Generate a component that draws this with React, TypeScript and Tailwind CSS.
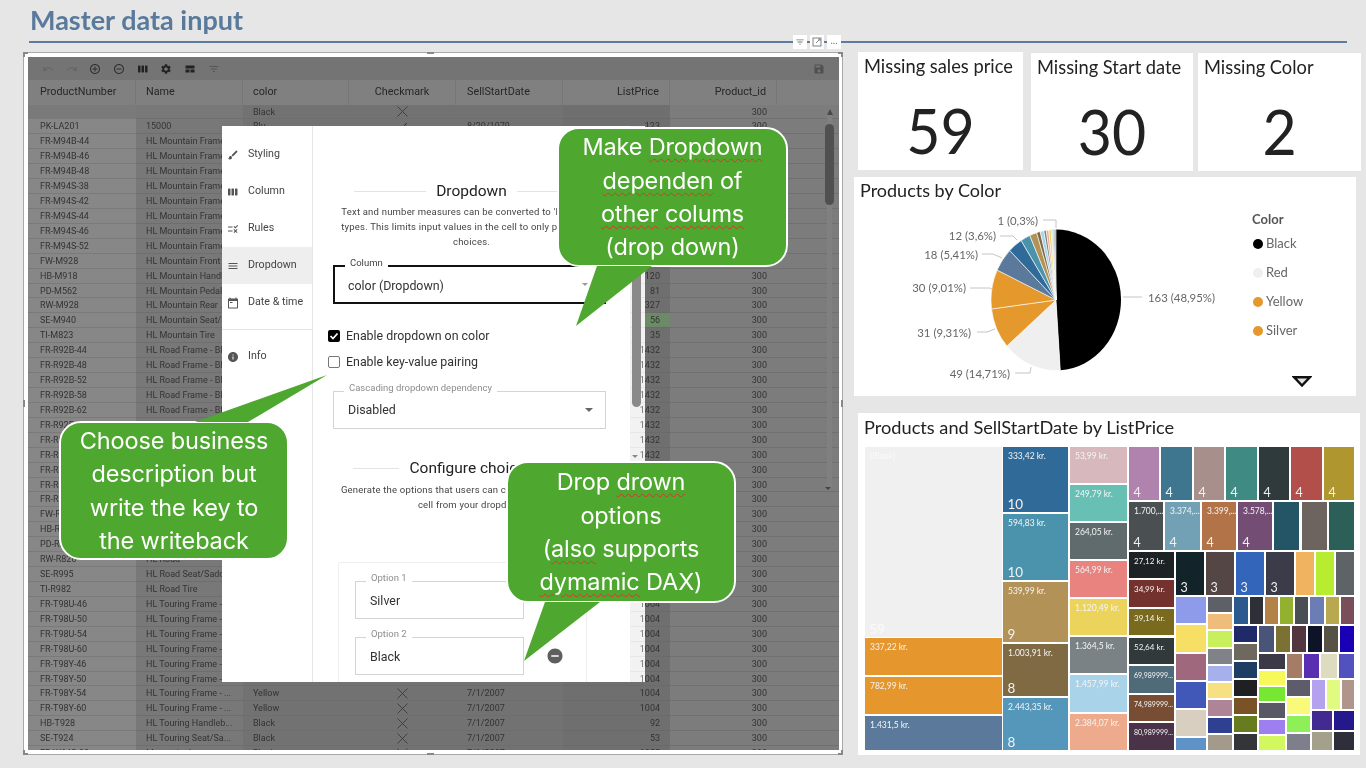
import React from "react";

const P = {
  brush: "M7 14c-1.66 0-3 1.34-3 3 0 1.31-1.16 2-2 2 .92 1.22 2.49 2 4 2 2.21 0 4-1.79 4-4 0-1.66-1.34-3-3-3zm13.71-9.37l-1.34-1.34c-.39-.39-1.02-.39-1.41 0L9 12.25 11.75 15l8.96-8.96c.39-.39.39-1.02 0-1.41z",
  week: "M6 5H3c-.55 0-1 .45-1 1v12c0 .55.45 1 1 1h3c.55 0 1-.45 1-1V6c0-.55-.45-1-1-1zm14 0h-3c-.55 0-1 .45-1 1v12c0 .55.45 1 1 1h3c.55 0 1-.45 1-1V6c0-.55-.45-1-1-1zm-7 0h-3c-.55 0-1 .45-1 1v12c0 .55.45 1 1 1h3c.55 0 1-.45 1-1V6c0-.55-.45-1-1-1z",
  rule: "M16.54 11L13 7.46l1.41-1.41 2.12 2.12 4.24-4.24 1.41 1.41L16.54 11zM11 7H2v2h9V7zm10 6.41L19.59 12 17 14.59 14.41 12 13 13.41 15.59 16 13 18.59 14.41 20 17 17.41 19.59 20 21 18.59 18.41 16 21 13.41zM11 15H2v2h9v-2z",
  menu: "M3 18h18v-2H3v2zm0-5h18v-2H3v2zm0-7v2h18V6H3z",
  cal: "M20 3h-1V1h-2v2H7V1H5v2H4c-1.1 0-2 .9-2 2v16c0 1.1.9 2 2 2h16c1.1 0 2-.9 2-2V5c0-1.1-.9-2-2-2zm0 18H4V8h16v13zM6 10h5v2H6z",
  info: "M12 2C6.48 2 2 6.48 2 12s4.48 10 10 10 10-4.48 10-10S17.52 2 12 2zm1 15h-2v-6h2v6zm0-8h-2V7h2v2z",
  add: "M13 7h-2v4H7v2h4v4h2v-4h4v-2h-4V7zm-1-5C6.48 2 2 6.48 2 12s4.48 10 10 10 10-4.48 10-10S17.52 2 12 2zm0 18c-4.41 0-8-3.59-8-8s3.59-8 8-8 8 3.59 8 8-3.59 8-8 8z",
  rem: "M7 11v2h10v-2H7zm5-9C6.48 2 2 6.48 2 12s4.48 10 10 10 10-4.48 10-10S17.52 2 12 2zm0 18c-4.41 0-8-3.59-8-8s3.59-8 8-8 8 3.59 8 8-3.59 8-8 8z",
  undo: "M12.5 8c-2.65 0-5.05.99-6.9 2.6L2 7v9h9l-3.62-3.62c1.39-1.16 3.16-1.88 5.12-1.88 3.54 0 6.55 2.31 7.6 5.5l2.37-.78C21.08 11.03 17.15 8 12.5 8z",
  redo: "M18.4 10.6C16.55 8.99 14.15 8 11.5 8c-4.65 0-8.58 3.03-9.96 7.22L3.9 16c1.05-3.19 4.05-5.5 7.6-5.5 1.95 0 3.73.72 5.12 1.88L13 16h9V7l-3.6 3.6z",
  gear: "M19.14 12.94c.04-.3.06-.61.06-.94 0-.32-.02-.64-.07-.94l2.03-1.58c.18-.14.23-.41.12-.61l-1.92-3.32c-.12-.22-.37-.29-.59-.22l-2.39.96c-.5-.38-1.03-.7-1.62-.94l-.36-2.54c-.04-.24-.24-.41-.48-.41h-3.84c-.24 0-.43.17-.47.41l-.36 2.54c-.59.24-1.13.57-1.62.94l-2.39-.96c-.22-.08-.47 0-.59.22L2.74 8.87c-.12.21-.08.47.12.61l2.03 1.58c-.05.3-.09.63-.09.94s.02.64.07.94l-2.03 1.58c-.18.14-.23.41-.12.61l1.92 3.32c.12.22.37.29.59.22l2.39-.96c.5.38 1.03.7 1.62.94l.36 2.54c.05.24.24.41.48.41h3.84c.24 0 .44-.17.47-.41l.36-2.54c.59-.24 1.13-.56 1.62-.94l2.39.96c.22.08.47 0 .59-.22l1.92-3.32c.12-.22.07-.47-.12-.61l-2.01-1.58zM12 15.6c-1.98 0-3.6-1.62-3.6-3.6s1.62-3.6 3.6-3.6 3.6 1.62 3.6 3.6-1.62 3.6-3.6 3.6z",
  quilt: "M3 5h18v6H3zM3 13h8v6H3zM13 13h8v6h-8z",
  filter: "M10 18h4v-2h-4v2zM3 6v2h18V6H3zm3 7h12v-2H6v2z",
  save: "M17 3H5c-1.11 0-2 .9-2 2v14c0 1.1.89 2 2 2h14c1.1 0 2-.9 2-2V7l-4-4zm-5 16c-1.66 0-3-1.34-3-3s1.34-3 3-3 3 1.34 3 3-1.34 3-3 3zm3-10H5V5h10v4z",
  minus: "M12 2C6.48 2 2 6.48 2 12s4.48 10 10 10 10-4.48 10-10S17.52 2 12 2zm5 11H7v-2h10v2z",
};

function Ico({ d, size, fill, className }: { d: string; size: number; fill: string; className?: string }) {
  return (
    <svg width={size} height={size} viewBox="0 0 24 24" fill={fill} className={className}>
      <path d={d} />
    </svg>
  );
}

const pn = [
  "", "PK-LA201", "FR-M94B-44", "FR-M94B-46", "FR-M94B-48", "FR-M94S-38", "FR-M94S-42", "FR-M94S-44", "FR-M94S-46", "FR-M94S-52",
  "FW-M928", "HB-M918", "PD-M562", "RW-M928", "SE-M940", "TI-M823", "FR-R92B-44", "FR-R92B-48", "FR-R92B-52", "FR-R92B-58", "FR-R92B-62",
  "FR-R92R-44", "FR-R92R-48", "FR-R92R-52", "FR-R92R-58", "FR-R92R-62", "FR-R38R-44", "FW-R820", "HB-R956", "PD-R853", "RW-R820", "SE-R995", "TI-R982",
  "FR-T98U-46", "FR-T98U-50", "FR-T98U-54", "FR-T98U-60", "FR-T98Y-46", "FR-T98Y-50", "FR-T98Y-54", "FR-T98Y-60", "HB-T928", "SE-T924", "FR-W64S-38",
];
function nameOf(p: string, i: number) {
  if (i === 0) return "";
  if (i === 1) return "15000";
  if (p.startsWith("FR-M")) return "HL Mountain Frame - ...";
  if (p === "FW-M928") return "HL Mountain Front ...";
  if (p === "HB-M918") return "HL Mountain Handleb...";
  if (p === "PD-M562") return "HL Mountain Pedal";
  if (p === "RW-M928") return "HL Mountain Rear ...";
  if (p === "SE-M940") return "HL Mountain Seat/S...";
  if (p === "TI-M823") return "HL Mountain Tire";
  if (p.startsWith("FR-R")) return "HL Road Frame - Black...";
  if (p === "SE-R995") return "HL Road Seat/Saddle";
  if (p === "TI-R982") return "HL Road Tire";
  if (p === "HB-T928") return "HL Touring Handleb...";
  if (p === "SE-T924") return "HL Touring Seat/Sa...";
  if (p.startsWith("FR-T")) return "HL Touring Frame - ...";
  if (i === 43) return "Mountain Jersey";
  return "HL Road";
}
function priceOf(i: number) {
  if (i === 1) return "123";
  if (i >= 2 && i <= 10) return "";
  const m: Record<number, string> = { 11: "120", 12: "81", 13: "327", 14: "56", 15: "35", 41: "92", 42: "53", 43: "1055" };
  if (m[i]) return m[i];
  if (i >= 16 && i <= 26) return "1432";
  if (i >= 33) return "1004";
  return "";
}
const colors: Record<number, string> = { 0: "Black", 1: "Blu", 39: "Yellow", 40: "Yellow", 41: "Black", 42: "Black", 43: "Black" };

function XMark() {
  return (
    <svg width="11" height="11" viewBox="0 0 11 11" stroke="#3a3a3a" strokeWidth="0.9" fill="none">
      <path d="M0.5 0.5L10.5 10.5M10.5 0.5L0.5 10.5" />
    </svg>
  );
}
function Check() {
  return (
    <svg width="11" height="11" viewBox="0 0 11 11" stroke="#2a2a2a" strokeWidth="1" fill="none">
      <path d="M1.5 6L4.5 9L9.5 2" />
    </svg>
  );
}

function Row({ i }: { i: number }) {
  const p = pn[i];
  const price = priceOf(i);
  const hasDate = i === 1 || i >= 39;
  return (
    <div className="flex h-[14.93px] shrink-0 text-[9px] leading-[14px] text-[#333]">
      <div className={`w-[108px] pl-[12px] border-b border-[#7a7a7a] ${i === 0 ? "bg-[#7a7a7a]" : "bg-[#878787]"}`}>{p}</div>
      <div className="w-[107px] pl-[10px] bg-[#787878] border-b border-[#6e6e6e] whitespace-nowrap overflow-hidden">{nameOf(p, i)}</div>
      <div className="w-[106px] pl-[10px] bg-[#727272] border-b border-[#6e6e6e]">{colors[i] ?? ""}</div>
      <div className="w-[107px] bg-[#727272] flex items-center justify-center border-b border-[#6e6e6e]">
        {i === 0 || i >= 39 ? <XMark /> : i === 1 ? <Check /> : null}
      </div>
      <div className="w-[107px] pl-[11px] bg-[#727272] border-b border-[#6e6e6e]">{i === 1 ? "8/20/1979" : hasDate ? "7/1/2007" : ""}</div>
      <div className={`w-[107px] pr-[10px] text-right border-b border-[#6a6a6a] ${i === 14 ? "bg-[linear-gradient(90deg,#6f6f6f_82px,#6b8a66_82px)]" : "bg-[#6f6f6f]"}`}>{price}</div>
      <div className="w-[107px] pr-[10px] text-right bg-[#7c7c7c] border-b border-[#707070]">300</div>
      <div className="flex-1 bg-[#7c7c7c] border-b border-[#707070]" />
    </div>
  );
}

function Table() {
  const heads: [string, string][] = [
    ["ProductNumber", "w-[108px] pl-[12px] text-left"],
    ["Name", "w-[107px] pl-[10px] text-left"],
    ["color", "w-[106px] pl-[10px] text-left"],
    ["Checkmark", "w-[107px] text-center"],
    ["SellStartDate", "w-[107px] pl-[11px] text-left"],
    ["ListPrice", "w-[107px] pr-[10px] text-right"],
    ["Product_id", "w-[107px] pr-[10px] text-right"],
  ];
  const tools: string[] = [P.undo, P.redo, P.add, P.rem, P.week, P.gear, P.quilt, P.filter];
  return (
    <div className="relative h-full overflow-hidden bg-[#7c7c7c] flex flex-col">
      <div className="h-[23px] shrink-0 bg-[#747474] flex items-center pl-[14px] pr-[14px] gap-[11.7px]">
        {tools.map((d, k) => (
          <Ico key={k} d={d} size={12} fill={k < 2 ? "#666" : k < 4 ? "#2f2f2f" : k === 7 ? "#555" : "#222"} />
        ))}
        <div className="flex-1" />
        <Ico d={P.save} size={12} fill="#505050" />
      </div>
      <div className="h-[24.5px] shrink-0 bg-[#808080] flex text-[10.8px] leading-[24px] text-[#262626]">
        {heads.map(([t, c]) => (
          <div key={t} className={`${c} border-r border-[#767676]`}>{t}</div>
        ))}
      </div>
      {pn.map((_, i) => (
        <Row key={i} i={i} />
      ))}
      <div className="absolute left-[799px] top-[56px] w-[5px] h-[375px] bg-[#808080]" />
      <div className="absolute left-[797px] top-[67px] w-[9px] h-[81px] rounded-full bg-[#505050]" />
      <div className="absolute left-[799px] top-[52px] w-0 h-0 border-x-[3px] border-x-transparent border-b-[6px] border-b-[#4a4a4a]" />
      <div className="absolute left-[797px] top-[430px] w-0 h-0 border-x-[3px] border-x-transparent border-t-[3px] border-t-[#444]" />
    </div>
  );
}

function Frame({ label, h, active, className, children, muted }: { label: string; h: string; active?: boolean; className?: string; muted?: boolean; children: React.ReactNode }) {
  return (
    <div className={`relative ${h} ${className ?? ""} ${active ? "border-2 border-[#111]" : "border border-[#d4d4d4]"}`}>
      <span className={`absolute left-[10px] -top-[10px] px-[5px] bg-white text-[9.5px] leading-[12px] ${muted ? "text-[#8d8d8d]" : "text-[#444]"}`}>{label}</span>
      {children}
    </div>
  );
}

function Heading({ t, w }: { t: string; w: string }) {
  return (
    <div className="flex items-center justify-center gap-[10px] h-[20px]">
      <div className={`${w} h-px bg-[#e3e3e3]`} />
      <div className="text-[15.5px] leading-[20px] text-[#222] whitespace-nowrap">{t}</div>
      <div className={`${w} h-px bg-[#e3e3e3]`} />
    </div>
  );
}

function Modal() {
  const items: [string, string, boolean][] = [
    ["Styling", P.brush, false],
    ["Column", P.week, false],
    ["Rules", P.rule, false],
    ["Dropdown", P.menu, true],
    ["Date & time", P.cal, false],
  ];
  return (
    <>
      <div className="absolute left-[222px] top-[126px] w-[408px] h-[556px] bg-white flex overflow-hidden font-[Roboto,sans-serif]">
        <div className="w-[91px] shrink-0 border-r border-[#e6e6e6] pt-[10px]">
          {items.map(([t, d, a]) => (
            <div key={t} className={`flex items-center h-[37px] pl-[5px] gap-[9px] text-[10.7px] text-[#444] ${a ? "bg-[#eeeeee]" : ""}`}>
              <Ico d={d} size={12} fill="#555" />
              {t}
            </div>
          ))}
          <div className="h-px bg-[#e4e4e4] mt-[8px]" />
          <div className="flex items-center h-[37px] pl-[5px] gap-[9px] mt-[8px] text-[10.7px] text-[#444]">
            <Ico d={P.info} size={12} fill="#555" />
            Info
          </div>
        </div>
        <div className="flex-1 min-w-0">
          <div className="pt-[55px]">
            <Heading t="Dropdown" w="w-[72px]" />
          </div>
          <div className="mt-[3px] text-center text-[9.5px] leading-[15px] tracking-[0.2px] text-[#444] whitespace-nowrap">
            <div>Text and number measures can be converted to 'Dropdown'</div>
            <div>types. This limits input values in the cell to only pre-defined</div>
            <div>choices.</div>
          </div>
          <Frame label="Column" h="h-[39px]" active className="ml-[20px] w-[273px] mt-[16px]">
            <div className="pl-[13px] pt-[11px] text-[12.4px] leading-[16px] text-[#333]">color (Dropdown)</div>
            <div className="absolute right-[16px] top-[16px] w-0 h-0 border-x-[3px] border-x-transparent border-t-[3px] border-t-[#999]" />
          </Frame>
          <div className="ml-[15px] mt-[24px] flex items-center h-[16px] gap-[6px] text-[12.4px] text-[#333]">
            <div className="w-[12px] h-[12px] rounded-[2px] bg-black flex items-center justify-center">
              <svg width="10" height="10" viewBox="0 0 10 10" fill="none" stroke="#fff" strokeWidth="1.7"><path d="M1.5 5L4 7.5L8.5 2.5" /></svg>
            </div>
            Enable dropdown on color
          </div>
          <div className="ml-[15px] mt-[10px] flex items-center h-[16px] gap-[6px] text-[12.4px] text-[#333]">
            <div className="w-[12px] h-[12px] rounded-[2px] border border-[#777]" />
            Enable key-value pairing
          </div>
          <Frame label="Cascading dropdown dependency" h="h-[38px]" muted className="ml-[20px] w-[273px] mt-[21px]">
            <div className="pl-[14px] pt-[10px] text-[12.4px] leading-[16px] text-[#333]">Disabled</div>
            <div className="absolute right-[12px] top-[16px] w-0 h-0 border-x-[4px] border-x-transparent border-t-[4px] border-t-[#666]" />
          </Frame>
          <div className="mt-[29px]">
            <Heading t="Configure choices" w="w-[46px]" />
          </div>
          <div className="mt-[4px] text-center text-[9.5px] leading-[15px] tracking-[0.2px] text-[#444] whitespace-nowrap">
            <div>Generate the options that users can choose to populate the</div>
            <div>cell from your dropdown</div>
          </div>
          <div className="ml-[25px] w-[249px] mt-[49.5px] h-[140px] border border-[#eeeeee] rounded-[2px] pl-[16px] pt-[18px]">
            <Frame label="Option 1" h="h-[38px]" muted className="w-[169px]">
              <div className="pl-[14px] pt-[11px] text-[12.4px] leading-[16px] text-[#333]">Silver</div>
            </Frame>
            <div className="mt-[18px] flex items-center">
              <Frame label="Option 2" h="h-[38px]" muted className="w-[169px]">
                <div className="pl-[14px] pt-[11px] text-[12.4px] leading-[16px] text-[#333]">Black</div>
              </Frame>
              <Ico d={P.minus} size={18} fill="#5f5f5f" className="ml-[22px]" />
            </div>
          </div>
        </div>
      </div>
      <div className="absolute left-[630px] top-[126px] w-[15px] h-[556px] bg-[#8a8a8a] mix-blend-color-dodge" />
      <div className="absolute left-[632px] top-[250px] w-[9px] h-[157px] rounded-b-full bg-[#8a8a8a]" />
      <div className="absolute left-[632px] top-[455px] w-0 h-0 border-x-[3px] border-x-transparent border-t-[3px] border-t-[#888]" />
    </>
  );
}

const wavy = "underline decoration-wavy decoration-[#d9362b] decoration-1 underline-offset-[3px]";

function Callout({ box, tail, children }: { box: string; tail: string; children: React.ReactNode }) {
  return (
    <>
      <div className={`absolute ${box} rounded-[22px] bg-[#4ea72e] border-2 border-white flex flex-col items-center justify-center text-white text-[23.5px] tracking-[-0.15px] leading-[33.4px] font-[Inter,sans-serif] whitespace-nowrap`}>
        {children}
      </div>
      <svg className="absolute left-0 top-0 pointer-events-none" width="1366" height="768">
        <polygon points={tail} fill="#4ea72e" />
      </svg>
    </>
  );
}

function Pie() {
  const data: [number, string][] = [
    [163, "#000000"], [49, "#efefef"], [31, "#e5982c"], [30, "#e5982c"], [18, "#5b7a9b"], [12, "#2f6a99"], [8, "#4b93ad"], [6, "#b39257"],
    [3, "#7f6a44"], [3, "#a9d3e8"], [2, "#7b8285"], [2, "#eeaa8c"], [2, "#ecd45c"], [1, "#d7b9bd"], [1, "#68bfb3"], [1, "#5f6b6d"], [1, "#5497bb"],
  ];
  const total = data.reduce((a, b) => a + b[0], 0);
  const cx = 1056, cy = 300, rx = 65, ry = 70.5;
  let acc = 0;
  const slices = data.map(([v, c], i) => {
    const a0 = (acc / total) * 2 * Math.PI;
    acc += v;
    const a1 = (acc / total) * 2 * Math.PI;
    const x0 = cx + rx * Math.sin(a0), y0 = cy - ry * Math.cos(a0);
    const x1 = cx + rx * Math.sin(a1), y1 = cy - ry * Math.cos(a1);
    const large = a1 - a0 > Math.PI ? 1 : 0;
    return <path key={i} d={`M${cx} ${cy}L${x0} ${y0}A${rx} ${ry} 0 ${large} 1 ${x1} ${y1}Z`} fill={c} stroke="#fff" strokeWidth={i === 0 ? 0 : 0.6} />;
  });
  const lines = ["1123,297 1142,297", "1015,373 1030,373 1031,367", "977,332 987,332 995,329", "970,288 990,288 993,290", "982,254 993,254 1002,258", "1000,236 1013,236 1017,240", "1043,220 1056,220 1056,228"];
  const labels: [string, number, number, "start" | "end"][] = [
    ["163 (48,95%)", 1148, 302, "start"], ["49 (14,71%)", 1010, 378, "end"], ["31 (9,31%)", 971, 337, "end"], ["30 (9,01%)", 966, 292, "end"],
    ["18 (5,41%)", 978, 259, "end"], ["12 (3,6%)", 996, 240, "end"], ["1 (0,3%)", 1038, 225, "end"],
  ];
  return (
    <svg viewBox="854 207 385 187" width="385" height="187" className="shrink-0">
      {slices}
      {lines.map((l, i) => <polyline key={i} points={l} fill="none" stroke="#c4c4c4" strokeWidth="1" />)}
      {labels.map(([t, x, y, a]) => (
        <text key={t} x={x} y={y} textAnchor={a} fontSize="11.4" fill="#666" className="font-[Lato,sans-serif]">{t}</text>
      ))}
    </svg>
  );
}

type R = [number, number, number, number, string, string?, string?];
const tree: R[] = [
  [865, 1002, 447, 637, "#f0f0f0", "(Blank)", "59"], [865, 1002, 638, 675, "#e5972d", "337,22 kr."], [865, 1002, 677, 714, "#e5972d", "782,99 kr."], [865, 1002, 716, 750, "#5b7a9b", "1.431,5 kr."],
  [1003, 1068, 447, 512, "#2f6a99", "333,42 kr.", "10"], [1003, 1068, 514, 580, "#4b93ad", "594,83 kr.", "10"], [1003, 1068, 582, 642, "#b39257", "539,99 kr.", "9"], [1003, 1068, 644, 696, "#7f6a44", "1.003,91 kr.", "8"], [1003, 1068, 698, 750, "#5497bb", "2.443,35 kr.", "8"],
  [1070, 1127, 447, 483, "#d7b9bd", "53,99 kr."], [1070, 1127, 485, 521, "#68bfb3", "249,79 kr."], [1070, 1127, 523, 559, "#5f6b6d", "264,05 kr."], [1070, 1127, 561, 597, "#e8837f", "564,99 kr."], [1070, 1127, 599, 635, "#ecd45c", "1.120,49 kr."], [1070, 1127, 637, 673, "#7b8285", "1.364,5 kr."], [1070, 1127, 675, 712, "#a9d3e8", "1.457,99 kr."], [1070, 1127, 714, 750, "#eeaa8c", "2.384,07 kr."],
  [1129, 1159, 447, 500, "#b083ae", "", "4"], [1161, 1192, 447, 500, "#3e7690", "", "4"], [1194, 1224, 447, 500, "#a78f8c", "", "4"], [1226, 1257, 447, 500, "#3f8b83", "", "4"], [1259, 1289, 447, 500, "#2f3a3d", "", "4"], [1291, 1322, 447, 500, "#b34f4b", "", "4"], [1324, 1354, 447, 500, "#b0962f", "", "4"],
  [1129, 1163, 502, 550, "#4a5052", "1.700,...", "4"], [1165, 1200, 502, 550, "#72a0b4", "3.374,...", "4"], [1202, 1236, 502, 550, "#b27348", "3.399,...", "4"], [1238, 1272, 502, 550, "#744d74", "3.578,...", "4"], [1274, 1299, 502, 550, "#235566"], [1302, 1327, 502, 550, "#6d6460"], [1329, 1354, 502, 550, "#2c5f58"],
  [1129, 1174, 552, 578, "#1d2224", "27,12 kr."], [1129, 1174, 580, 607, "#74322f", "34,99 kr."], [1129, 1174, 609, 635, "#7a6a1e", "39,14 kr."], [1129, 1174, 638, 664, "#32393b", "52,64 kr."], [1129, 1174, 666, 693, "#4f6b78", "69,989999..."], [1129, 1174, 695, 721, "#774d33", "74,989999..."], [1129, 1174, 723, 750, "#4a3349", "80,989999..."],
  [1176, 1204, 552, 595, "#13232a", "", "3"], [1206, 1234, 552, 595, "#534645", "", "3"], [1236, 1264, 552, 595, "#3366bb", "", "3"], [1266, 1294, 552, 595, "#3a3d49", "", "3"], [1296, 1314, 552, 595, "#f0b35f"], [1316, 1334, 552, 595, "#b7ec30"], [1336, 1354, 552, 595, "#5e6367"],
  [1176, 1206, 597, 623, "#8e9bea"], [1176, 1206, 625, 652, "#f7de65"], [1176, 1206, 654, 680, "#a0687d"], [1176, 1206, 682, 708, "#4158b8"], [1176, 1206, 710, 736, "#d8cfc0"], [1176, 1206, 738, 750, "#5f93c8"],
  [1208, 1232, 597, 612, "#5d6167"], [1208, 1232, 614, 629, "#efbd7b"], [1208, 1232, 631, 647, "#c8ef5c"], [1208, 1232, 649, 664, "#7f8387"], [1208, 1232, 666, 681, "#a6b1ec"], [1208, 1232, 683, 698, "#f7e081"], [1208, 1232, 700, 716, "#ad8597"], [1208, 1232, 718, 733, "#2f4090"], [1208, 1232, 735, 750, "#a39a8c"],
  [1234, 1248, 597, 624, "#2c5a8e"], [1250, 1263, 597, 624, "#2d3036"], [1265, 1278, 597, 624, "#b28247"], [1280, 1293, 597, 624, "#94b02f"], [1295, 1308, 597, 624, "#4a4f55"], [1310, 1324, 597, 624, "#6c7cb4"], [1326, 1339, 597, 624, "#b8a850"], [1341, 1354, 597, 624, "#794e5b"],
  [1234, 1257, 626, 642, "#1f2a68"], [1234, 1257, 644, 660, "#6d695e"], [1234, 1257, 662, 678, "#1e3f63"], [1234, 1257, 680, 696, "#1f2024"], [1234, 1257, 698, 714, "#7a5228"], [1234, 1257, 716, 732, "#667c1e"], [1234, 1257, 734, 750, "#343538"],
  [1259, 1274, 626, 652, "#4a5478"], [1276, 1290, 626, 652, "#7a7132"], [1292, 1306, 626, 652, "#53363f"], [1308, 1322, 626, 652, "#0e1428"], [1324, 1338, 626, 652, "#585146"], [1340, 1354, 626, 652, "#1a00b4"],
  [1259, 1285, 654, 669, "#3b3848"], [1259, 1285, 671, 685, "#f7f95a"], [1259, 1285, 687, 701, "#76e832"], [1259, 1285, 703, 718, "#5a5866"], [1259, 1285, 720, 734, "#9d7ff0"], [1259, 1285, 736, 750, "#d3f75f"],
  [1287, 1302, 654, 678, "#a67c66"], [1304, 1319, 654, 678, "#5a2eb0"], [1321, 1337, 654, 678, "#dedcc0"], [1339, 1354, 654, 678, "#5350c0"],
  [1287, 1310, 680, 696, "#5e5c6a"], [1287, 1310, 698, 714, "#f9f97a"], [1287, 1310, 716, 732, "#8eef58"], [1287, 1310, 734, 750, "#7e7f8c"],
  [1312, 1325, 680, 709, "#b4a2ef"], [1327, 1340, 680, 709, "#e0fb80"], [1342, 1354, 680, 709, "#b0958c"],
  [1312, 1332, 711, 730, "#432a90"], [1334, 1354, 711, 730, "#25178c"], [1312, 1332, 732, 750, "#a3a08c"], [1334, 1354, 732, 750, "#2e2f3a"],
];

function Treemap() {
  return (
    <svg viewBox="858 441 502 314" width="502" height="314" className="font-[Lato,sans-serif]">
      {tree.map(([x0, x1, y0, y1, c, lab, num], i) => (
        <g key={i}>
          <rect x={x0} y={y0} width={x1 - x0} height={y1 - y0} fill={c} />
          {lab ? <text x={x0 + 5} y={y0 + 12} fontSize={x0 === 1129 && y0 >= 552 ? (lab.length > 10 ? 7 : 8) : 8.5} fill={i === 0 ? "#fafafa" : "#f4f4f4"}>{lab}</text> : null}
          {num ? <text x={x0 + 4.5} y={y1 - 3.5} fontSize={x0 < 1070 ? 13.5 : 12.5} fill={i === 0 ? "#fafafa" : "#f2f2f2"}>{num}</text> : null}
        </g>
      ))}
    </svg>
  );
}

function Kpi({ title, value, className }: { title: string; value: string; className: string }) {
  return (
    <div className={`${className} h-[118px] bg-white flex flex-col`}>
      <div className="pl-[6px] pt-[2px] text-[18.3px] leading-[24px] text-[#222] whitespace-nowrap">{title}</div>
      <div className="flex-1 flex items-center justify-center text-[59px] leading-[60px] text-[#222] pt-[14px] scale-y-[1.05]">{value}</div>
    </div>
  );
}

export default function App() {
  const legend: [string, string][] = [["Black", "#000"], ["Red", "#efefef"], ["Yellow", "#e5982c"], ["Silver", "#e5982c"]];
  return (
    <div className="relative w-[1366px] h-[768px] overflow-hidden bg-[#e6e6e6] font-[Lato,sans-serif]">
      <div className="h-[41px] pl-[30px] text-[27px] leading-[39px] font-bold text-[#5a7a9c]">Master data input</div>
      <div className="ml-[29px] w-[1318px] h-[2px] bg-[#5e7d9e]" />
      <div className="flex pl-[23px] mt-[9px]">
        <div className="relative w-[820px] h-[703px] shrink-0 bg-white border border-[#a8a8a8] pl-[4px] pr-[3px] py-[4px] font-[Roboto,sans-serif]">
          <Table />
          <div className="absolute -left-[1px] -top-[1px] w-[5px] h-[5px] border-l-2 border-t-2 border-[#888]" />
          <div className="absolute -right-[1px] -top-[1px] w-[5px] h-[5px] border-r-2 border-t-2 border-[#888]" />
          <div className="absolute -left-[1px] -bottom-[1px] w-[5px] h-[5px] border-l-2 border-b-2 border-[#888]" />
          <div className="absolute -right-[1px] -bottom-[1px] w-[5px] h-[5px] border-r-2 border-b-2 border-[#888]" />
          <div className="absolute left-[403px] -top-[1px] w-[7px] h-[2px] bg-[#888]" />
          <div className="absolute left-[403px] -bottom-[1px] w-[7px] h-[2px] bg-[#888]" />
          <div className="absolute -left-[1px] top-[347px] w-[2px] h-[7px] bg-[#888]" />
          <div className="absolute -right-[1px] top-[347px] w-[2px] h-[7px] bg-[#888]" />
        </div>
        <div className="ml-[11px] w-[507px] flex flex-col">
          <div className="flex pl-[4px] items-start">
            <Kpi title="Missing sales price" value="59" className="w-[165px]" />
            <Kpi title="Missing Start date" value="30" className="w-[162px] ml-[8px] mt-[1px]" />
            <Kpi title="Missing Color" value="2" className="w-[163px] ml-[5px] mt-[1px]" />
          </div>
          <div className="relative mt-[6px] w-[502px] h-[219px] bg-white flex flex-col">
            <div className="pl-[6px] pt-[1px] h-[30px] text-[18px] leading-[24px] text-[#222]">Products by Color</div>
            <div className="flex">
              <Pie />
              <div className="pl-[13px] pt-[4px]">
                <div className="text-[13px] leading-[17px] font-bold text-[#555]">Color</div>
                {legend.map(([t, c], i) => (
                  <div key={t} className={`flex items-center h-[29px] gap-[3px] text-[13px] text-[#666] ${i === 0 ? "mt-[1px]" : ""}`}>
                    <span className="w-[10px] h-[10px] rounded-full ml-[1px]" style={{ background: c }} />
                    {t}
                  </div>
                ))}
              </div>
            </div>
            <svg className="absolute left-[438px] top-[199px]" width="20" height="11" viewBox="0 0 20 11">
              <polygon points="2,1.2 18,1.2 10,9.5" fill="#e4e4e4" stroke="#111" strokeWidth="2.4" />
            </svg>
          </div>
          <div className="ml-[4px] mt-[17px] w-[502px] h-[342px] bg-white">
            <div className="pl-[6px] pt-[2px] h-[28px] text-[18.2px] leading-[24px] text-[#222] whitespace-nowrap">Products and SellStartDate by ListPrice</div>
            <Treemap />
          </div>
        </div>
      </div>

      <Modal />

      <Callout box="left-[557px] top-[127px] w-[231px] h-[140px]" tail="597,266 652,266 576,326">
        <div>Make <span className={wavy}>Dropdown</span></div>
        <div><span className={wavy}>dependen</span> of</div>
        <div><span className={wavy}>other</span> <span className={wavy}>colums</span></div>
        <div>(drop down)</div>
      </Callout>
      <Callout box="left-[59px] top-[421px] w-[230px] h-[139px]" tail="195,422 248,422 327,375">
        <div>Choose business</div>
        <div>description but</div>
        <div>write the key to</div>
        <div>the writeback</div>
      </Callout>
      <Callout box="left-[506px] top-[461px] w-[230px] h-[142px]" tail="545,602 600,602 524,661">
        <div>Drop <span className={wavy}>drown</span></div>
        <div>options</div>
        <div>(<span className={wavy}>also</span> supports</div>
        <div><span className={wavy}>dymamic</span> DAX)</div>
      </Callout>

      <div className="absolute left-[793px] top-[35px] flex items-center gap-[3px]">
        <div className="w-[14px] h-[14px] bg-white flex items-center justify-center"><Ico d={P.filter} size={10} fill="#777" /></div>
        <div className="w-[14px] h-[14px] bg-white flex items-center justify-center">
          <svg width="10" height="10" viewBox="0 0 10 10" fill="none" stroke="#777" strokeWidth="0.9"><rect x="1" y="1" width="8" height="8" /><path d="M4 6L8 2M6 2h2v2" /></svg>
        </div>
        <div className="w-[14px] h-[14px] bg-white text-[#777] text-[10px] leading-[10px] text-center">...</div>
      </div>
    </div>
  );
}
